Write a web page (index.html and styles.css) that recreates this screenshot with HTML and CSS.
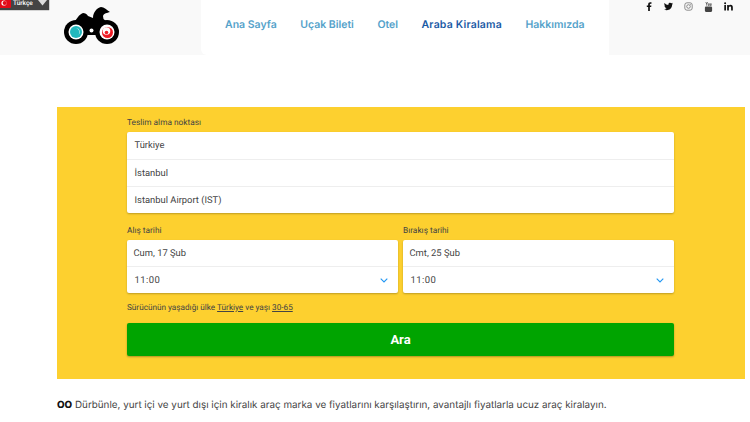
FILE: index.html
```html
<!DOCTYPE html>
<html lang="tr">
<head>
<meta charset="utf-8">
<title>Araba Kiralama</title>
<link rel="stylesheet" href="styles.css">
</head>
<body>
<div class="lang">
  <svg class="flag" width="18" height="10" viewBox="0 0 18 10"><rect width="18" height="10" rx="1" fill="#e30a17"/><circle cx="11" cy="5" r="2.600" fill="#fff"/><circle cx="11.700" cy="5" r="2.100" fill="#e30a17"/></svg>
  <span class="lang-name">Türkçe</span>
  <svg class="lang-caret" width="9" height="6" viewBox="0 0 9 6"><path d="M0 0H9L4.500 5.500Z" fill="#ddd"/></svg>
</div>
<header class="header">
  <a class="logo" href="#">
    <svg width="56" height="38" viewBox="0 0 56 38">
      <path d="M8 18L14 10C15 8 17 7 19 6C21 6 23 7 24 9L29 11C29 5 33 1 37 0C40 0 43 3 46 5C43 6 40 6 39 9L39.500 12L47 18V28H8Z" fill="#000"/>
      <circle cx="12" cy="25" r="12" fill="#000"/>
      <circle cx="43" cy="25" r="12" fill="#000"/>
      <circle cx="27.500" cy="23.500" r="2" fill="#fff"/>
      <circle cx="12" cy="25" r="7.500" fill="#fff"/>
      <circle cx="12" cy="25" r="6" fill="#22b8bd"/>
      <path d="M12 21A4 4 0 0 1 14.500 28A4.500 4.500 0 0 0 12 21Z" fill="#fff"/>
      <circle cx="43" cy="25" r="7.500" fill="#fff"/>
      <circle cx="43.500" cy="25.500" r="5.500" fill="#ee1c25"/>
      <circle cx="42.500" cy="24" r="3.800" fill="#fff"/>
      <circle cx="42.500" cy="25.500" r="1.800" fill="#ee1c25"/>
    </svg>
  </a>
  <nav class="nav">
    <a class="nav-link" href="#">Ana Sayfa</a>
    <a class="nav-link" href="#">Uçak Bileti</a>
    <a class="nav-link" href="#">Otel</a>
    <a class="nav-link active" href="#">Araba Kiralama</a>
    <a class="nav-link" href="#">Hakkımızda</a>
  </nav>
  <div class="social">
    <svg width="9" height="9" viewBox="0 0 10 10"><path d="M3.500 10V5.500H2V3.800H3.500V2.600C3.500 1 4.400.2 5.800.2H7.200V1.900H6.300C5.600 1.900 5.400 2.200 5.400 2.800V3.800H7.100L6.900 5.500H5.400V10Z" fill="#111"/></svg>
    <svg width="9" height="9" viewBox="0 0 10 10"><path d="M0 8.300C3.800 10.300 9 8.300 9 3L10 1.800 8.800 2.100 9.700.9 8.400 1.500C6.800-.1 4.400 1.100 4.900 3.200 3.200 3.100 1.600 2.300.6 1 0 2.200.4 3.500 1.300 4.100L.4 3.900C.5 5 1.200 5.800 2.200 6L1.300 6.100C1.600 7 2.400 7.500 3.200 7.500 2.300 8.200 1.200 8.400 0 8.300Z" fill="#111"/></svg>
    <svg width="9" height="9" viewBox="0 0 10 10"><rect x=".9" y=".9" width="8.200" height="8.200" rx="2.400" fill="none" stroke="#666" stroke-width=".8"/><circle cx="5" cy="5" r="2" fill="none" stroke="#666" stroke-width=".8"/><circle cx="7.300" cy="2.700" r=".5" fill="#666"/></svg>
    <svg width="9" height="10" viewBox="0 0 10 11"><rect x="1" y="5" width="8" height="6" rx="1.200" fill="#444"/><path d="M2 0L3 2.200V4M4 0L3 2.200M4.800 1.500V3.800H5.800V1.500M7 1.500V3.800H8V1.500" fill="none" stroke="#444" stroke-width=".8"/></svg>
    <svg width="9" height="9" viewBox="0 0 10 10"><path d="M.3 3.300H2.200V9.500H.3ZM1.250.4A1.100 1.100 0 1 1 1.250 2.600 1.100 1.100 0 0 1 1.250.4ZM3.500 3.300H5.300V4.200C5.700 3.500 6.400 3.100 7.300 3.100 9.100 3.100 9.800 4.200 9.800 6V9.500H7.900V6.400C7.900 5.500 7.600 4.900 6.800 4.900 5.900 4.900 5.400 5.500 5.400 6.500V9.500H3.500Z" fill="#111"/></svg>
  </div>
</header>
<main class="main">
  <section class="search">
    <div class="field-label">Teslim alma noktası</div>
    <div class="card">
      <div class="row">Türkiye</div>
      <div class="row">İstanbul</div>
      <div class="row">Istanbul Airport (IST)</div>
    </div>
    <div class="dates">
      <div class="date-col">
        <div class="field-label">Alış tarihi</div>
        <div class="card">
          <div class="row row-date">Cum, 17 Şub</div>
          <div class="row row-time">11:00
            <svg class="chev" width="8" height="5" viewBox="0 0 8 5"><path d="M.7.7L4 4 7.300.7" fill="none" stroke="#2196f3" stroke-width="1.100"/></svg>
          </div>
        </div>
      </div>
      <div class="date-col">
        <div class="field-label">Bırakış tarihi</div>
        <div class="card">
          <div class="row row-date">Cmt, 25 Şub</div>
          <div class="row row-time">11:00
            <svg class="chev" width="8" height="5" viewBox="0 0 8 5"><path d="M.7.7L4 4 7.300.7" fill="none" stroke="#2196f3" stroke-width="1.100"/></svg>
          </div>
        </div>
      </div>
    </div>
    <p class="driver">Sürücünün yaşadığı ülke <u>Türkiye</u> ve yaşı <u>30-65</u></p>
    <button class="go" type="button">Ara</button>
  </section>
  <p class="intro"><b class="oo">OO</b> Dürbünle, yurt içi ve yurt dışı için kiralık araç marka ve fiyatlarını karşılaştırın, avantajlı fiyatlarla ucuz araç kiralayın.</p>
</main>
</body>
</html>
```
FILE: styles.css
```css
* { box-sizing: border-box; }
html, body { margin: 0; padding: 0; }
body {
  width: 750px;
  height: 422px;
  overflow: hidden;
  background: #fff;
  font-family: "Roboto", "Liberation Sans", sans-serif;
  color: #333;
  position: relative;
  text-rendering: geometricPrecision;
}
.lang {
  position: absolute;
  top: 0;
  left: 0;
  width: 49px;
  height: 10px;
  background: #444;
  display: flex;
  align-items: center;
  overflow: hidden;
  box-shadow: 0 0 1px #222;
}
.flag { flex: none; margin: -4px 0 0 -7px; }
.lang-name {
  color: #fff;
  font: 500 6.500px/10px "Roboto", sans-serif;
  margin: -4px 0 0 2px;
}
.lang-caret { margin: -4px 0 0 5px; flex: none; }
.header {
  height: 55px;
  background: #f9f9f9;
  display: flex;
  align-items: flex-start;
}
.logo { display: block; margin: 7px 0 0 64px; width: 56px; height: 38px; }
.nav {
  margin-left: 81px;
  width: 408px;
  height: 55px;
  background: #fff;
  border-bottom-left-radius: 6px;
  display: flex;
  align-items: center;
  padding: 0 0 6px 24px;
  gap: 23.500px;
}
.nav-link {
  font: 600 10.500px/14px "Inter", sans-serif;
  color: #55a2ca;
  text-decoration: none;
  white-space: nowrap;
}
.nav-link.active { color: #1a5aa5; letter-spacing: .2px; }
.social {
  margin-left: 35.500px;
  display: flex;
  gap: 10.750px;
  padding-top: 2px;
}
.main { padding: 52px 5px 0 57px; }
.search {
  height: 272px;
  background: #fdd02f;
  padding: 11px 71px 0 70px;
}
.field-label {
  font-size: 8.300px;
  line-height: 11px;
  color: #444;
  margin-bottom: 3px;
}
.card {
  background: #fff;
  border-radius: 2px;
  box-shadow: 0 1px 2px rgba(0,0,0,.25);
}
.row {
  height: 27px;
  padding: 1px 7.500px 0;
  display: flex;
  align-items: center;
  justify-content: space-between;
  font-size: 9.400px;
  color: #444;
  border-top: 1px solid #eee;
}
.row:first-child { border-top: 0; height: 26.500px; }
.row-date { padding-left: 6.500px; }
.row-time { font-size: 9.500px; letter-spacing: .4px; padding-right: 10px; }
.dates {
  display: flex;
  gap: 5px;
  margin-top: 13px;
}
.date-col { flex: 1 1 0; }
.driver {
  margin: 9px 0 0;
  font-size: 8.200px;
  line-height: 12px;
  color: #444;
}
.go {
  display: block;
  width: 100%;
  height: 33px;
  margin-top: 9px;
  border: 0;
  border-radius: 2px;
  background: #00a400;
  color: #fff;
  font: 700 13px "Roboto", sans-serif;
  box-shadow: 0 1px 2px rgba(0,0,0,.3);
}
.intro {
  margin: 19px 0 0;
  font: 400 9.850px/14px "Inter", sans-serif;
  color: #444;
  white-space: nowrap;
}
.oo { color: #111; font-weight: 800; }
```
